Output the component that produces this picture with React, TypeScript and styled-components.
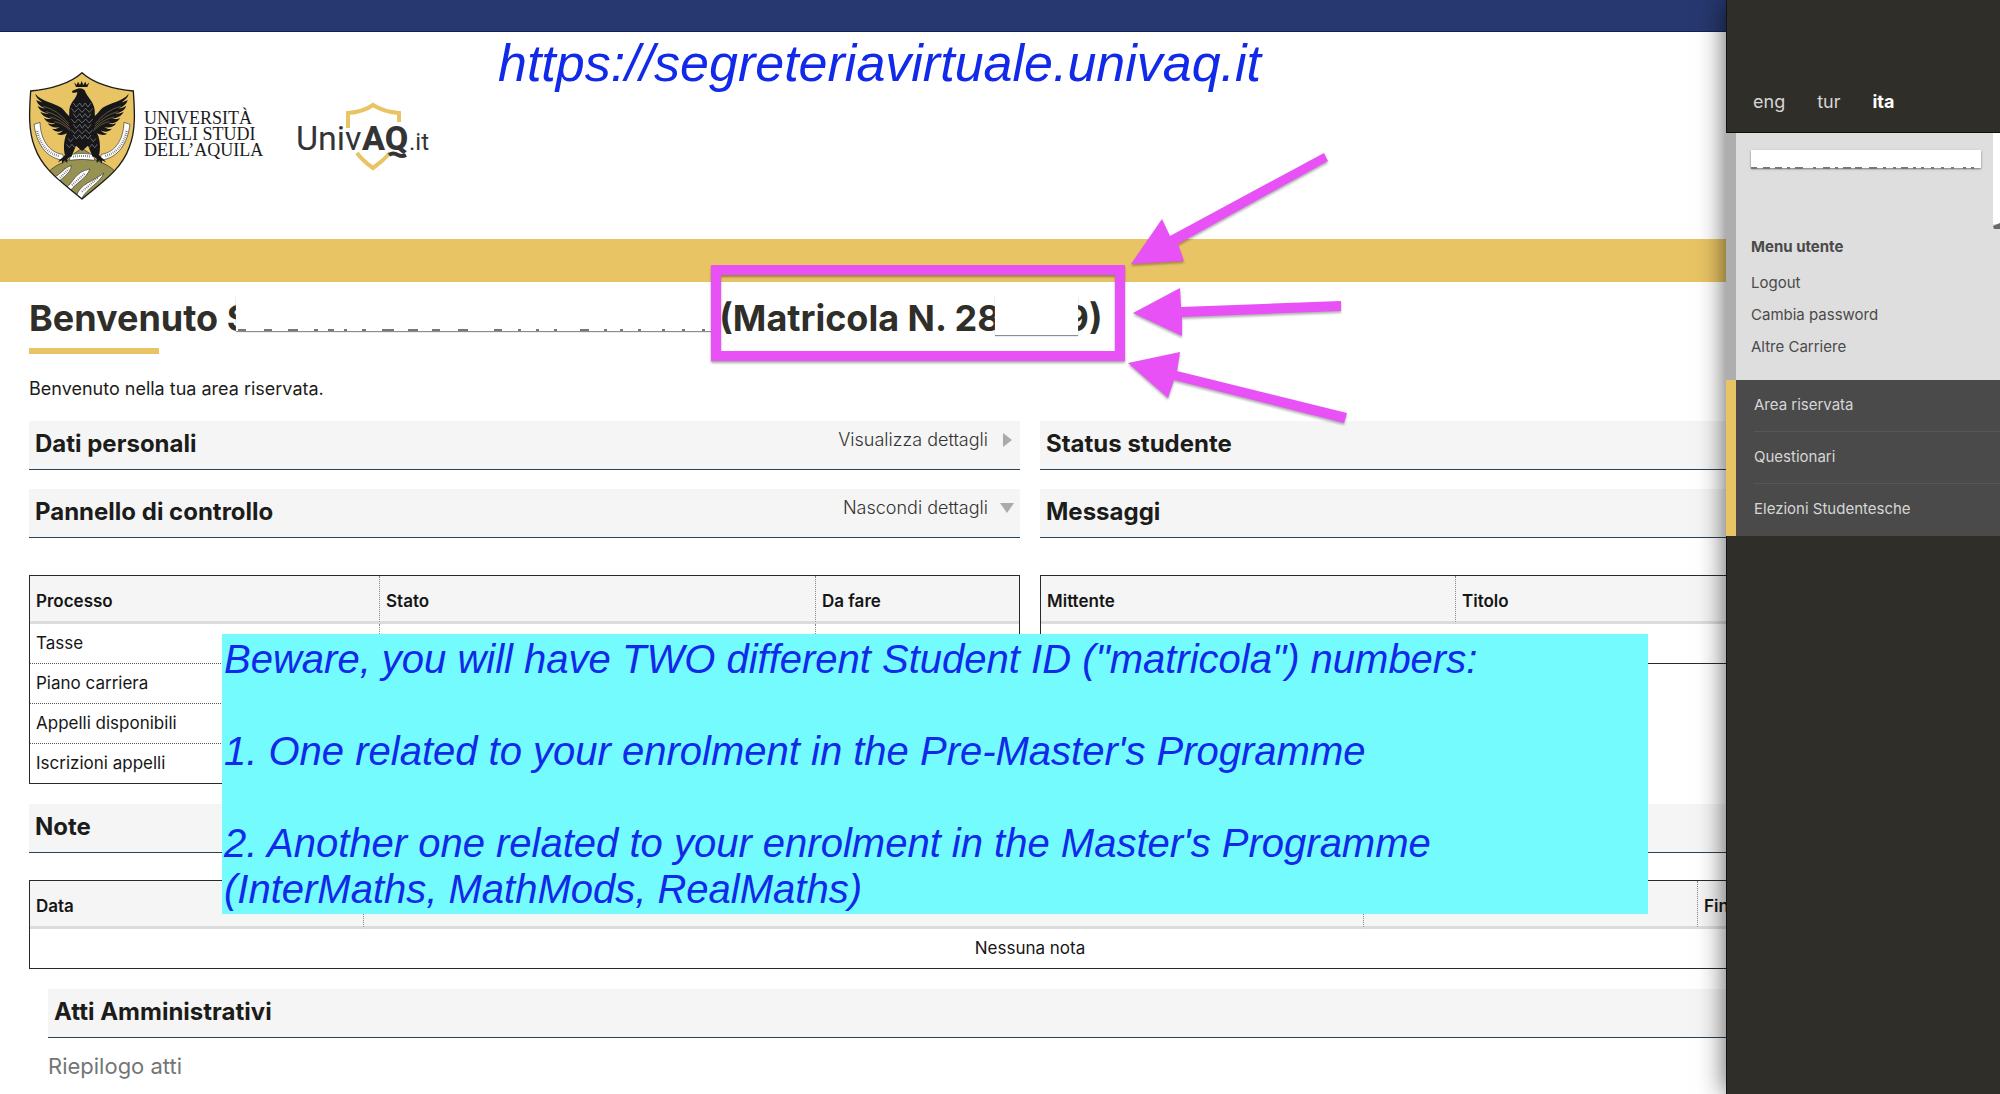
import React from "react";
import styled, { createGlobalStyle } from "styled-components";

const GlobalStyle = createGlobalStyle`
  *, *::before, *::after { box-sizing: border-box; }
  body {
    margin: 0;
    background: #fff;
    color: #1c1c1a;
    font-family: Inter, "Open Sans", sans-serif;
    font-size: 17px;
    line-height: 24px;
  }
  h1, h2, p, ul { margin: 0; padding: 0; }
  a { color: inherit; text-decoration: none; }
`;

const gold = "#e8c464";
const ink = "#2f2e29";
const magenta = "#e751f5";

const Shell = styled.div`
  position: relative;
  display: flex;
  min-height: 100vh;
  overflow: hidden;
`;

const Main = styled.main`
  flex: 1;
  min-width: 0;
  overflow: hidden;
`;

const TopBar = styled.div`
  height: 32px;
  background: #273870;
  border-bottom: 1px solid #14204f;
`;

const Header = styled.header`
  display: flex;
  align-items: center;
  height: 207px;
  padding-left: 28px;
`;

const Wordmark = styled.div`
  margin-left: 8px;
  padding-bottom: 4px;
  font-family: "Liberation Serif", serif;
  font-size: 18px;
  line-height: 16px;
  color: #1b1b1b;
`;

const UnivaqLogo = styled.svg`
  margin-left: 32px;
`;

const GoldBand = styled.div`
  height: 43px;
  background: ${gold};
`;

/* The page is wider than the visible area and continues under the side menu. */
const Content = styled.div`
  width: calc(100% + 334px);
  padding: 14px 29px 0;
`;

const Title = styled.h1`
  height: 44px;
  font-size: 36px;
  line-height: 44px;
  font-weight: 700;
  color: ${ink};
  white-space: nowrap;
`;

const Mask = styled.span<{ $width: number; $pull: number; $cover: number; $height: number }>`
  position: relative;
  display: inline-block;
  vertical-align: top;
  width: ${(p) => p.$width}px;
  height: ${(p) => p.$height}px;
  margin: 0 -${(p) => p.$cover}px 0 -${(p) => p.$pull}px;
  background: #fff;
  box-shadow: 0 1px 1px #8d8d8d;
`;

const Matricola = styled.span`
  margin-left: 8px;
`;

const Slivers = styled.svg`
  position: absolute;
  left: 0;
  bottom: -2px;
`;

const TitleRule = styled.div`
  width: 130px;
  height: 6px;
  margin-top: 8px;
  background: ${gold};
`;

const Intro = styled.p`
  margin: 23px 0 20px;
  font-size: 18px;
`;

const Columns = styled.div`
  display: grid;
  grid-template-columns: 1fr 1fr;
  column-gap: 20px;
  margin-bottom: 20px;
`;

const Stack = styled.div`
  display: flex;
  flex-direction: column;
`;

const Bar = styled.div`
  display: flex;
  justify-content: space-between;
  align-items: flex-start;
  height: 49px;
  padding: 7px 6px 0;
  background: #f5f5f5;
  border-bottom: 1px solid #2b4254;
  & + & { margin-top: 19px; }
`;

const BarTitle = styled.h2`
  font-size: 24px;
  line-height: 32px;
  font-weight: 700;
`;

const Toggle = styled.button`
  display: flex;
  align-items: center;
  gap: 12px;
  padding: 0;
  border: 0;
  background: none;
  color: #333;
  font: inherit;
  font-size: 18px;
  font-weight: 300;
  cursor: pointer;
`;

const Table = styled.table<{ $top: number }>`
  width: 100%;
  margin-top: ${(p) => p.$top}px;
  table-layout: fixed;
  border-collapse: separate;
  border-spacing: 0;
  border: 1px solid #2a2a2a;

  th, td {
    padding: 0 6px;
    text-align: left;
    color: #161616;
  }
  th {
    height: 48px;
    padding-top: 5px;
    background: #f5f5f5;
    border-bottom: 3px solid #dcdcdc;
    font-size: 17px;
    font-weight: 600;
  }
  td {
    height: 40px;
    padding-bottom: 2px;
    border-bottom: 1px dotted #555;
  }
  tr:last-child td { height: 39px; border-bottom: 0; }
  th + th, td + td { border-left: 1px dotted #888; }
`;

const EmptyCell = styled.td`
  && { text-align: center; }
`;

const Acts = styled.section`
  margin: 20px 19px 0;
`;

const ActsSummary = styled.p`
  margin-top: 14px;
  font-size: 22px;
  line-height: 28px;
  color: #757575;
`;

const Sidebar = styled.aside`
  position: relative;
  width: 274px;
  flex: none;
  background: ${ink};
  border-left: 1px solid #14130f;
  box-shadow: 0 0 26px rgba(0, 0, 0, 0.65);
  color: #d6d6d6;
`;

const Languages = styled.nav`
  display: flex;
  align-items: flex-end;
  gap: 32px;
  height: 133px;
  padding: 0 26px 18px;
  border-bottom: 1px solid #0d0d0b;
  font-size: 18px;
`;

const Language = styled.a<{ $active?: boolean }>`
  color: ${(p) => (p.$active ? "#fff" : "#d6d6d6")};
  font-weight: ${(p) => (p.$active ? 700 : 400)};
`;

const UserBox = styled.section`
  display: grid;
  grid-template-columns: 230px 7px;
  justify-content: space-between;
  margin-left: -1px;
  height: 247px;
  padding-left: 15px;
  background: #dedede;
  border-left: 10px solid #aeaeae;
  color: #4a4a4a;
  font-size: 15px;
`;

const UserName = styled.div`
  position: relative;
  height: 18px;
  margin-top: 17px;
  background: #fff;
  box-shadow: 0 1px 2px #777;
`;

const Avatar = styled.div`
  height: 91px;
  background: #fff;
`;

const AvatarEdge = styled.svg`
  display: block;
  margin-top: 90px;
`;

const MenuTitle = styled.h2`
  margin-top: 67px;
  font-size: 15px;
  line-height: 24px;
`;

const UserLinks = styled.ul`
  margin-top: 8px;
  list-style: none;
  line-height: 32px;
  a { display: block; white-space: nowrap; }
`;

const AreaMenu = styled.ul`
  margin-left: -1px;
  padding-left: 18px;
  background: #4a4a4a;
  border-left: 10px solid ${gold};
  list-style: none;
  font-size: 15px;
`;

const AreaItem = styled.li`
  height: 52px;
  padding-top: 13px;
  border-bottom: 1px solid #575757;
  &:last-child { border-bottom: 0; }
`;

/* Annotations drawn over the page. */
const Address = styled.a`
  && { color: #1129e8; }
  position: absolute;
  left: 498px;
  top: 33px;
  font: italic 52px/60px "Liberation Sans", Arial, sans-serif;
`;

const Warning = styled.aside`
  position: absolute;
  left: 222px;
  top: 634px;
  width: 1426px;
  padding: 2px;
  background: #73fbfd;
  color: #1129e8;
  font: italic 40px/46px "Liberation Sans", Arial, sans-serif;
  p + p { margin-top: 46px; }
`;

const Highlight = styled.div`
  position: absolute;
  left: 711px;
  top: 265px;
  width: 414px;
  height: 96px;
  border: 10px solid ${magenta};
  filter: drop-shadow(0 2px 1px rgba(0, 0, 0, 0.35));
`;

const Arrows = styled.svg`
  position: absolute;
  left: 1120px;
  top: 140px;
  filter: drop-shadow(0 2px 1px rgba(0, 0, 0, 0.3));
`;

const wing =
  "M150 150 C138 158 128 136 112 122 C88 106 52 104 34 80 C36 92 46 100 56 106 C48 104 42 102 37 98 C40 112 52 120 64 124 C54 124 47 120 41 116 C46 131 60 137 74 139 C64 141 56 138 49 134 C56 148 70 154 84 154 C74 158 66 156 59 152 C67 166 80 170 94 168 C86 173 78 172 71 169 C80 181 94 184 106 180 C98 187 91 187 84 185 C94 196 108 196 118 190 C110 198 104 200 98 200 C112 208 128 202 138 192 C134 202 130 206 124 210 C138 212 150 202 156 190 Z";

function Crest() {
  const rows = [108, 124, 140, 156, 172, 188, 204];
  return (
    <svg width="108" height="130" viewBox="12 12 324 390" role="img" aria-label="Stemma Università degli Studi dell'Aquila">
      <defs>
        <clipPath id="shield">
          <path d="M174 17 C140 48 80 68 20 72 C16 130 12 190 32 240 C56 310 120 350 174 396 C228 350 292 310 316 240 C336 190 332 130 328 72 C268 68 208 48 174 17Z" />
        </clipPath>
      </defs>
      <g clipPath="url(#shield)">
        <rect width="348" height="414" fill={gold} />
        <path d="M60 330 C100 278 136 292 150 260 L174 244 L198 260 C212 292 250 278 288 330 L288 414 L60 414Z" fill="#989252" stroke="#222" strokeWidth="2" />
        <path d="M92 330 C112 320 122 300 142 296 C140 318 118 330 104 344Z M126 362 C150 346 152 314 198 306 C186 336 160 344 138 372Z M158 384 C170 350 206 344 240 318 C226 350 190 362 172 396Z" fill="#fff" stroke="#333" strokeWidth="2" />
        <path d="M30 172 L48 166 C50 218 74 256 116 262 L122 282 L108 278 C64 268 38 230 30 172Z M318 172 L300 166 C298 218 274 256 232 262 L226 282 L240 278 C284 268 310 230 318 172Z" fill="#fff" stroke="#333" strokeWidth="2" />
        <path d="M140 262 Q174 256 208 262 L212 280 Q174 274 136 280Z" fill="#fff" stroke="#333" strokeWidth="2" />
      </g>
      <path d="M40 192 C48 228 66 258 108 268 M308 192 C300 228 282 258 240 268" fill="none" stroke="#555" strokeWidth="7" strokeDasharray="2 4" />
      <path d="M148 269 Q174 265 202 269 M108 332 L134 306 M144 354 L184 318 M174 374 L222 332" fill="none" stroke="#555" strokeWidth="6" strokeDasharray="2 4" />
      <path d={wing} fill="#17171a" />
      <path d={wing} fill="#17171a" transform="translate(348 0) scale(-1 1)" />
      <path d="M144 72 L158 66 Q172 60 182 70 C190 92 208 102 212 128 L214 190 C224 204 232 230 226 262 L206 270 L192 236 L174 252 L156 236 L142 270 L122 262 C116 230 124 204 134 190 L136 128 C140 102 158 96 160 76 L146 78Z" fill="#17171a" />
      <path d="M150 46 L156 60 H190 L196 46 L188 54 L184 44 L178 54 L173 42 L168 54 L162 44 L158 54Z" fill="#17171a" />
      <path d="M126 258 C122 270 108 274 102 286 L114 280 L114 290 L122 280 L130 288 L130 276 L142 266Z M222 258 C226 270 240 274 246 286 L234 280 L234 290 L226 280 L218 288 L218 276 L206 266Z" fill="#17171a" />
      <g fill="none" stroke="#8b8d93" strokeWidth="2">
        {rows.map((y, i) => (
          <path key={y} d={i % 2 ? `M142 ${y} l10 12 l11 -12 l11 12 l11 -12 l11 12 l10 -12` : `M148 ${y} l9 12 l10 -12 l8 12 l8 -12 l9 12 l9 -12`} />
        ))}
        <path d="M132 214 l8 10 l8 -10 M128 232 l8 10 l8 -10 l8 10 M200 214 l8 10 l8 -10 M196 242 l8 -10 l8 10 l8 -10" />
      </g>
      <path
        d="M58 118 Q100 128 134 170 M66 134 Q104 142 136 178 M78 150 Q110 156 138 186 M92 164 Q116 168 140 192 M290 118 Q248 128 214 170 M282 134 Q244 142 212 178 M270 150 Q238 156 210 186 M256 164 Q232 168 208 192"
        fill="none"
        stroke="#8a7442"
        strokeWidth="2"
      />
      <path d="M174 17 C140 48 80 68 20 72 C16 130 12 190 32 240 C56 310 120 350 174 396 C228 350 292 310 316 240 C336 190 332 130 328 72 C268 68 208 48 174 17Z" fill="none" stroke="#1b1b1b" strokeWidth="4" />
    </svg>
  );
}

function Univaq() {
  return (
    <UnivaqLogo width="136" height="74" viewBox="296 98 136 74" role="img" aria-label="UnivAQ.it">
      <path d="M349 127 V112 Q364 111 374 104 Q385 111 400 112 V121 M358 152 Q364 160 374 167 Q384 160 391 152" fill="none" stroke={gold} strokeWidth="4" />
      <g fill="#343436" fontFamily="Roboto, sans-serif">
        <text x="297" y="149" fontSize="34" fontWeight="400" stroke="#fff" strokeWidth="3" paintOrder="stroke">Univ</text>
        <text x="363" y="149" fontSize="34" fontWeight="800" stroke="#fff" strokeWidth="3" paintOrder="stroke">AQ</text>
        <text x="410" y="149" fontSize="24" fontWeight="400">.it</text>
      </g>
      <path d="M390 154 Q394 151 399 154 Q403 156 407 154" fill="none" stroke="#343436" strokeWidth="4" />
    </UnivaqLogo>
  );
}

function SectionBar({ title, action, open }: { title: string; action?: string; open?: boolean }) {
  return (
    <Bar>
      <BarTitle>{title}</BarTitle>
      {action && (
        <Toggle type="button" aria-expanded={!!open}>
          {action}
          <svg width="14" height="14" viewBox="0 0 14 14" aria-hidden="true">
            <path d={open ? "M0 2H14L7 12Z" : "M3 0V14L12 7Z"} fill="#aaa" />
          </svg>
        </Toggle>
      )}
    </Bar>
  );
}

export default function App() {
  return (
    <>
      <GlobalStyle />
      <Shell>
        <Main>
          <TopBar />
          <Header>
            <Crest />
            <Wordmark>
              UNIVERSITÀ<br />DEGLI STUDI<br />DELL’AQUILA
            </Wordmark>
            <Univaq />
          </Header>
          <GoldBand />
          <Content>
            <Title>
              Benvenuto S
              <Mask $width={475} $pull={14} $cover={0} $height={35}>
                <Slivers width="475" height="4" aria-hidden="true">
                  <path d="M2 1h8M28 1h8M52 1h10M78 1h4M92 1h6M108 1h3M126 1h4M146 1h12M172 1h10M196 1h8M222 1h10M258 1h8M282 1h3M300 1h3M318 1h3M344 1h9M368 1h3M384 1h3M402 1h3M426 1h3M446 1h3M466 1h3" stroke="#777" strokeWidth="2" />
                </Slivers>
              </Mask>
              <Matricola>
                (Matricola N. 28
                <Mask $width={83} $pull={6} $cover={12} $height={39} />
                9)
              </Matricola>
            </Title>
            <TitleRule />
            <Intro>Benvenuto nella tua area riservata.</Intro>

            <Columns>
              <Stack>
                <SectionBar title="Dati personali" action="Visualizza dettagli" />
                <SectionBar title="Pannello di controllo" action="Nascondi dettagli" open />
                <Table $top={37}>
                  <colgroup>
                    <col width="349" />
                    <col width="436" />
                    <col />
                  </colgroup>
                  <thead>
                    <tr><th>Processo</th><th>Stato</th><th>Da fare</th></tr>
                  </thead>
                  <tbody>
                    {["Tasse", "Piano carriera", "Appelli disponibili", "Iscrizioni appelli"].map((name) => (
                      <tr key={name}><td>{name}</td><td /><td /></tr>
                    ))}
                  </tbody>
                </Table>
              </Stack>
              <Stack>
                <SectionBar title="Status studente" />
                <SectionBar title="Messaggi" />
                <Table $top={37}>
                  <colgroup>
                    <col width="414" />
                    <col />
                  </colgroup>
                  <thead>
                    <tr><th>Mittente</th><th>Titolo</th></tr>
                  </thead>
                  <tbody>
                    <tr><td colSpan={2} /></tr>
                  </tbody>
                </Table>
              </Stack>
            </Columns>

            <SectionBar title="Note" />
            <Table $top={27}>
              <colgroup>
                <col width="333" />
                <col />
                <col width="334" />
                <col width="333" />
              </colgroup>
              <thead>
                <tr><th>Data</th><th /><th /><th>Fine</th></tr>
              </thead>
              <tbody>
                <tr><EmptyCell colSpan={4}>Nessuna nota</EmptyCell></tr>
              </tbody>
            </Table>

            <Acts>
              <SectionBar title="Atti Amministrativi" />
              <ActsSummary>Riepilogo atti</ActsSummary>
            </Acts>
          </Content>
        </Main>

        <Sidebar>
          <Languages aria-label="Lingua">
            <Language href="#eng">eng</Language>
            <Language href="#tur">tur</Language>
            <Language href="#ita" $active>ita</Language>
          </Languages>
          <UserBox>
            <div>
              <UserName>
                <Slivers width="230" height="4" aria-hidden="true">
                  <path d="M0 2h6M12 2h7M24 2h7M36 2h3M44 2h8M62 2h3M72 2h7M84 2h3M92 2h8M104 2h7M118 2h8M132 2h3M142 2h3M150 2h7M162 2h3M170 2h3M180 2h3M190 2h3M200 2h3M212 2h3M220 2h3" stroke="#777" strokeWidth="2" />
                </Slivers>
              </UserName>
              <MenuTitle>Menu utente</MenuTitle>
              <UserLinks>
                <li><a href="#logout">Logout</a></li>
                <li><a href="#password">Cambia password</a></li>
                <li><a href="#carriere">Altre Carriere</a></li>
              </UserLinks>
            </div>
            <Avatar>
              <AvatarEdge width="7" height="6" aria-hidden="true">
                <path d="M0 3 L7 0 V6 H1Z" fill="#6d6470" />
              </AvatarEdge>
            </Avatar>
          </UserBox>
          <AreaMenu>
            <AreaItem><a href="#area">Area riservata</a></AreaItem>
            <AreaItem><a href="#questionari">Questionari</a></AreaItem>
            <AreaItem><a href="#elezioni">Elezioni Studentesche</a></AreaItem>
          </AreaMenu>
        </Sidebar>

        <Address href="#segreteria">https://segreteriavirtuale.univaq.it</Address>
        <Highlight />
        <Arrows width="240" height="300" viewBox="1120 140 240 300" fill={magenta} aria-hidden="true">
          <path d="M1131 264 L1162 219 L1170 236 L1324 153 L1328 161 L1178 244 L1184 261Z" />
          <path d="M1133 313 L1180 288 L1181 307 L1341 301 V311 L1182 317 V336Z" />
          <path d="M1128 363 L1180 352 L1177 371 L1347 413 L1344 423 L1174 380 L1168 398Z" />
        </Arrows>
        <Warning>
          <p>Beware, you will have TWO different Student ID ("matricola") numbers:</p>
          <p>1. One related to your enrolment in the Pre-Master's Programme</p>
          <p>
            2. Another one related to your enrolment in the Master's Programme
            <br />
            (InterMaths, MathMods, RealMaths)
          </p>
        </Warning>
      </Shell>
    </>
  );
}
